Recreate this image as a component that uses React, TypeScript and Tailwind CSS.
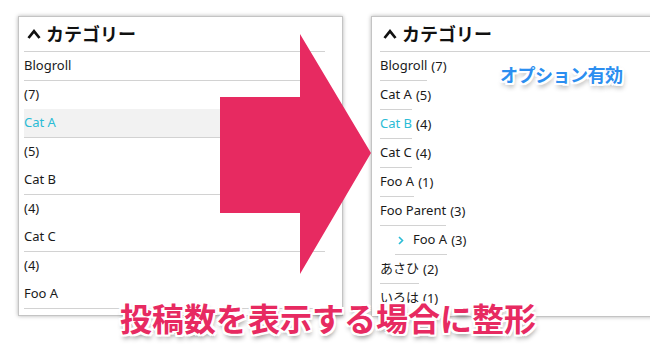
import React from 'react'

const font = { fontFamily: '"Noto Sans", "Noto Sans CJK JP", sans-serif' }

function Caret() {
  return (
    <svg width="14" height="10" viewBox="0 0 14 10" className="shrink-0">
      <polyline points="1.5,9 7,2.2 12.5,9" fill="none" stroke="#111" strokeWidth="2.7" strokeLinejoin="miter" />
    </svg>
  )
}

function Title() {
  return (
    <div className="h-[35px] flex items-center gap-[5px] border-b border-[#d2d2d2] pl-[3px] text-[18px] font-bold text-[#111]">
      <Caret />
      <span>カテゴリー</span>
    </div>
  )
}

const before = [
  { name: 'Blogroll', count: 7 },
  { name: 'Cat A', count: 5, hover: true },
  { name: 'Cat B', count: 4 },
  { name: 'Cat C', count: 4 },
  { name: 'Foo A', count: 1 },
]

const after = [
  { name: 'Blogroll', count: 7 },
  { name: 'Cat A', count: 5 },
  { name: 'Cat B', count: 4, hover: true },
  { name: 'Cat C', count: 4 },
  { name: 'Foo A', count: 1 },
  { name: 'Foo Parent', count: 3 },
  { name: 'Foo A', count: 3, child: true },
  { name: 'あさひ', count: 2 },
  { name: 'いろは', count: 1 },
]

const outline =
  '[text-shadow:2px_0_0_#fff,-2px_0_0_#fff,0_2px_0_#fff,0_-2px_0_#fff,2px_2px_0_#fff,-2px_-2px_0_#fff,2px_-2px_0_#fff,-2px_2px_0_#fff,1px_4px_5px_rgba(0,0,0,0.45)]'

export default function App() {
  return (
    <div className="relative w-[650px] h-[350px] overflow-hidden bg-white text-[13px] text-[#1a1a1a]" style={font}>
      <div className="flex items-start gap-[28px] pt-[16px] pl-[18px]">
        {/* before */}
        <div className="w-[325px] h-[300px] shrink-0 bg-white border border-[#c4c4c4] shadow-[0_0_4px_rgba(0,0,0,0.3)] pl-[5px] pr-[17px] overflow-hidden">
          <Title />
          <ul>
            {before.map((c) => (
              <li key={c.name}>
                <div className={`h-[29px] flex items-center border-b border-[#d2d2d2] ${c.hover ? 'bg-[#f2f2f2] text-[#2bbcd6]' : ''}`}>{c.name}</div>
                <div className="h-[28px] flex items-center">({c.count})</div>
              </li>
            ))}
          </ul>
        </div>

        {/* after */}
        <div className="w-[320px] h-[301px] shrink-0 bg-white border border-[#c4c4c4] shadow-[0_0_4px_rgba(0,0,0,0.3)] pl-[8px] overflow-hidden">
          <Title />
          <ul>
            {after.map((c, i) => (
              <li key={i} className={`h-[29px] flex items-stretch ${c.child ? 'pl-[15px]' : ''}`}>
                <span className={`flex items-center border-b border-[#d2d2d2] ${c.child ? 'pl-[3px] gap-[9px]' : ''} ${c.hover ? 'text-[#2bbcd6]' : ''}`}>
                  {c.child && (
                    <svg width="6" height="9" viewBox="0 0 6 9">
                      <polyline points="1,1 4.5,4.5 1,8" fill="none" stroke="#2bbcd6" strokeWidth="1.6" />
                    </svg>
                  )}
                  {c.name}
                </span>
                <span className="flex items-center pl-[4px]">({c.count})</span>
              </li>
            ))}
          </ul>
        </div>
      </div>

      {/* big arrow */}
      <svg className="absolute left-0 top-0 pointer-events-none" width="650" height="350" viewBox="0 0 650 350">
        <polygon points="220,97 300,97 300,34 371,153 300,274 300,213 220,213" fill="#e72a61" />
      </svg>

      <div className={`absolute left-[500px] top-[63px] text-[18px] font-bold leading-[24px] text-[#2b8ef0] tracking-[-0.5px] ${outline}`}>
        オプション有効
      </div>

      <div className={`absolute left-[120px] top-[299px] text-[32px] font-bold leading-[40px] text-[#e72a61] ${outline}`}>
        投稿数を表示する場合に整形
      </div>
    </div>
  )
}
